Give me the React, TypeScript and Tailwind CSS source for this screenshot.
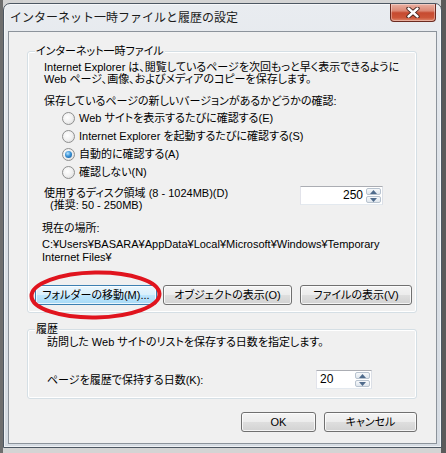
import React from "react";

const bodyFont =
  "font-['Liberation_Sans','Noto_Sans_CJK_JP',sans-serif] [font-feature-settings:'palt'] text-[11px] text-black whitespace-nowrap";

function Radio({ checked, label }: { checked?: boolean; label: string }) {
  return (
    <div className="flex h-[18px] items-center">
      <div className="flex h-[13px] w-[13px] items-center justify-center rounded-full border border-[#8e8f8f] bg-[radial-gradient(circle_at_40%_40%,#ffffff_0%,#f0f0f0_50%,#d4d4d4_100%)]">
        {checked && (
          <div className="h-[7px] w-[7px] rounded-full bg-[radial-gradient(circle_at_40%_35%,#b9e4ff_0%,#3b93d6_45%,#0d4f93_100%)]" />
        )}
      </div>
      <span className="ml-[4px] leading-[12px]">{label}</span>
    </div>
  );
}

function SpinArrows() {
  return (
    <div className="flex w-[16px] flex-col gap-[1px] py-[1px] pr-[1px]">
      <div className="flex flex-1 items-center justify-center rounded-[2px] border border-[#b8c3cf] bg-[linear-gradient(to_bottom,#f7f9fb,#dfe6ed)]">
        <svg width="7" height="4" viewBox="0 0 7 4">
          <path d="M0 4 L3.5 0 L7 4 Z" fill="#4f6b8c" />
        </svg>
      </div>
      <div className="flex flex-1 items-center justify-center rounded-[2px] border border-[#b8c3cf] bg-[linear-gradient(to_bottom,#f7f9fb,#dfe6ed)]">
        <svg width="7" height="4" viewBox="0 0 7 4">
          <path d="M0 0 L3.5 4 L7 0 Z" fill="#4f6b8c" />
        </svg>
      </div>
    </div>
  );
}

function WinButton({
  children,
  className,
  hot,
}: {
  children: React.ReactNode;
  className: string;
  hot?: boolean;
}) {
  return (
    <div
      className={
        "flex h-[20px] items-center justify-center rounded-[3px] border leading-[12px] shadow-[inset_0_0_0_1px_rgba(255,255,255,0.75)] " +
        (hot
          ? "border-[#3c7fb1] bg-[linear-gradient(to_bottom,#eaf6fd_0%,#d9f0fc_48%,#bee6fd_52%,#a7d9f5_100%)] "
          : "border-[#707070] bg-[linear-gradient(to_bottom,#f4f4f4_0%,#ececec_48%,#dedede_52%,#d2d2d2_100%)] ") +
        className
      }
    >
      {children}
    </div>
  );
}

function GroupBox({
  label,
  className,
  children,
}: {
  label: string;
  className: string;
  children: React.ReactNode;
}) {
  return (
    <div
      className={
        "relative ml-[18px] w-[390px] rounded-[3px] border border-[#d5dfe5] shadow-[inset_0_0_0_1px_#ffffff] " +
        className
      }
    >
      <span className="absolute left-[7px] top-[-8px] bg-[#f0f0f0] px-[1px] leading-[14px]">
        {label}
      </span>
      {children}
    </div>
  );
}

export default function App() {
  return (
    <div className="relative h-[453px] w-[446px] overflow-hidden bg-[linear-gradient(to_right,#6e6e6e_0px,#6e6e6e_3px,#d4d4d4_3px,#d4d4d4_441px,#5a5a5a_441px)] pl-[3px] pt-[3px]">
      {/* window */}
      <div className="flex h-[445px] w-[439px] flex-col rounded-t-[7px] border border-[#4d5762] bg-[linear-gradient(to_bottom,#e9ecf0_0%,#dde2e8_40%,#d6dce3_100%)] px-[4px] shadow-[inset_0_0_0_1px_rgba(255,255,255,0.6)]">
        {/* title bar */}
        <div className="flex h-[27px] items-start justify-between">
          <div className="pl-[2px] pt-[5px] font-['Noto_Sans_CJK_JP',sans-serif] text-[12px] leading-[16px] text-[#1b1b1b]">
            インターネット一時ファイルと履歴の設定
          </div>
          <div className="mr-[1px] flex h-[18px] w-[46px] items-center justify-center rounded-b-[4px] border border-t-0 border-[#6b2a20] bg-[linear-gradient(to_bottom,#eab0a2_0%,#dc8874_40%,#c64a30_52%,#cc5538_80%,#df8a70_100%)] shadow-[inset_0_0_0_1px_rgba(255,255,255,0.35)]">
            <svg width="14" height="11" viewBox="0 0 14 11">
              <path
                d="M2.5 1.5 L11.5 9.5 M11.5 1.5 L2.5 9.5"
                stroke="#3b1d17"
                strokeWidth="4.2"
                strokeLinecap="round"
              />
              <path
                d="M2.5 1.5 L11.5 9.5 M11.5 1.5 L2.5 9.5"
                stroke="#ffffff"
                strokeWidth="2.4"
                strokeLinecap="round"
              />
            </svg>
          </div>
        </div>

        {/* client area */}
        <div className={"flex h-[413px] flex-col border border-[#8c939b] bg-[#f0f0f0] " + bodyFont}>
          <GroupBox label="インターネット一時ファイル" className="mt-[19px] pb-[7px] pt-[9px]">
            <div className="pl-[16px] leading-[12px]">
              <div>Internet Explorer は、閲覧しているページを次回もっと早く表示できるように</div>
              <div>Web ページ、画像、およびメディアのコピーを保存します。</div>
              <div className="mt-[10px]">保存しているページの新しいバージョンがあるかどうかの確認:</div>
            </div>
            <div className="mt-[2px] pl-[34px]">
              <Radio label="Web サイトを表示するたびに確認する(E)" />
              <Radio label="Internet Explorer を起動するたびに確認する(S)" />
              <Radio checked label="自動的に確認する(A)" />
              <Radio label="確認しない(N)" />
            </div>
            <div className="mt-[6px] flex items-start">
              <div className="pl-[16px] leading-[12px]">
                <div>使用するディスク領域 (8 - 1024MB)(D)</div>
                <div className="pl-[6px]">(推奨: 50 - 250MB)</div>
              </div>
              <div className="ml-auto mr-[33px] mt-[-1px] flex h-[19px] w-[83px] border border-[#abadb3] border-l-[#e2e3ea] border-r-[#dbdfe6] border-b-[#e3e9ef] bg-white">
                <div className="flex-1 pr-[3px] text-right text-[12px] leading-[17px]">250</div>
                <SpinArrows />
              </div>
            </div>
            <div className="mt-[11px] pl-[14px] leading-[12px]">現在の場所:</div>
            <div className="mt-[4px] pl-[14px] leading-[13px]">
              <div>C:¥Users¥BASARA¥AppData¥Local¥Microsoft¥Windows¥Temporary</div>
              <div>Internet Files¥</div>
            </div>
            <div className="mt-[21px] flex pl-[7px]">
              <WinButton hot className="w-[122px]">
                フォルダーの移動(M)...
              </WinButton>
              <WinButton className="ml-[6px] w-[129px]">オブジェクトの表示(O)</WinButton>
              <WinButton className="ml-[8px] w-[112px]">ファイルの表示(V)</WinButton>
            </div>
          </GroupBox>

          <GroupBox label="履歴" className="mt-[16px] pb-[9px] pt-[6px]">
            <div className="pl-[19px] leading-[12px]">
              訪問した Web サイトのリストを保存する日数を指定します。
            </div>
            <div className="mt-[22px] flex h-[19px] items-center">
              <div className="pl-[19px] leading-[12px]">ページを履歴で保持する日数(K):</div>
              <div className="ml-auto mr-[44px] flex h-[19px] w-[56px] border border-[#abadb3] border-l-[#e2e3ea] border-r-[#dbdfe6] border-b-[#e3e9ef] bg-white">
                <div className="flex-1 pl-[3px] text-[12px] leading-[17px]">20</div>
                <SpinArrows />
              </div>
            </div>
          </GroupBox>

          <div className="mr-[19px] mt-[13px] flex justify-end">
            <WinButton className="w-[75px]">OK</WinButton>
            <WinButton className="ml-[8px] w-[93px]">キャンセル</WinButton>
          </div>
        </div>
      </div>

      {/* red hand-drawn highlight ellipse */}
      <svg
        className="pointer-events-none absolute left-0 top-0"
        width="446"
        height="453"
        viewBox="0 0 446 453"
      >
        <ellipse
          cx="95.5"
          cy="295"
          rx="64"
          ry="22.5"
          fill="none"
          stroke="#e0141e"
          strokeWidth="4"
          transform="rotate(-1 95.5 295)"
        />
      </svg>
    </div>
  );
}
